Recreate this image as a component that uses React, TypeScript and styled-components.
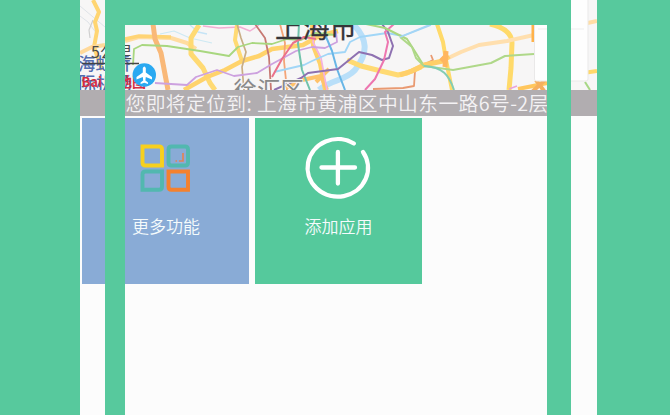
import React from "react";
import styled, { createGlobalStyle } from "styled-components";

const GREEN = "#57c99d";

const GlobalStyle = createGlobalStyle`
  * { box-sizing: border-box; }
  body { margin: 0; background: ${GREEN}; font-family: "Noto Sans CJK SC", sans-serif; overflow: hidden; }
`;

const Page = styled.main`
  display: flex;
  width: 670px;
  height: 415px;
  padding: 0 73px 0 80px;
  background: ${GREEN};
`;

const Screen = styled.section`
  position: relative;
  display: flex;
  flex-direction: column;
  width: 517px;
  height: 415px;
  background: #fcfcfc;
  overflow: hidden;
`;

const Frame = styled.div`
  position: absolute;
  inset: 0 26px -30px 25px;
  border: solid ${GREEN};
  border-width: 25px 24px 0 20px;
  pointer-events: none;
`;

const MapView = styled.svg`
  display: block;
  flex: none;
  width: 517px;
  height: 90px;
  background: #f7f6f6;
`;

const LocationBar = styled.div`
  flex: none;
  display: flex;
  align-items: center;
  height: 26px;
  padding-left: 45.5px;
  background: #b1adb0;
  color: #f4f2f4;
  font-size: 19.8px;
  font-weight: 350;
  letter-spacing: 0.38px;
  line-height: 26px;
  white-space: pre;
`;

const Tiles = styled.div`
  display: grid;
  grid-template-columns: 167px 167px;
  column-gap: 5.6px;
  padding: 2.4px 0 0 2.4px;
`;

const Tile = styled.div<{ $color: string }>`
  display: flex;
  flex-direction: column;
  align-items: center;
  height: 165.5px;
  padding-top: 18px;
  background: ${(p) => p.$color};
`;

const TileIcon = styled.svg`
  display: block;
  width: 66px;
  height: 64px;
  overflow: visible;
`;

const TileLabel = styled.span`
  margin-top: 13.5px;
  color: #f5fbfc;
  font-size: 17px;
  font-weight: 350;
  line-height: 24px;
`;

type Road = [path: string, color: string, width: number];

const roads: Road[] = [
  ["M80 16L88 22L97 34M80 6L105 27", "#dfe3e8", 1],
  ["M93 20L89 30L90 38", "#cfcfcf", 1.2],
  ["M93 0L99 12L95 22L97 31L94 47L102 70", "#ffd572", 4],
  ["M80 53L92 47L105 45", "#ffd99a", 4],
  ["M160 34L174 31L190 38L212 43", "#cde9f3", 1.2],
  ["M190 25L198 32L207 34", "#c5e4f6", 1.3],
  ["M203 26L219 28L240 27L250 31L259 25", "#f2afd3", 1.5],
  ["M354 25C367 39 369 52 355 70C345 81 330 80 319 90", "#b9dff9", 6],
  ["M125 41L139 37L171 38L187 43L196 49", "#ffdca0", 4],
  ["M125 39L139 36L171 37", "#ffd475", 3.5],
  ["M153 24L155 39L161 53L168 90", "#f9b878", 5],
  ["M199 25L191 38L191 54L203 68L210 83L215 90", "#ffda73", 5],
  ["M237 25L235 40L242 61", "#ffda73", 4],
  ["M184 90L207 77L225 70L242 61L259 56L272 49L303 45L319 36L338 31", "#ffd36b", 4.5],
  ["M237 24L241 38L246 52L242 67L244 90", "#c9ad84", 1.7],
  ["M255 24L265 38L269 57L271 90", "#c77973", 1.8],
  ["M280 24L285 43L284 61L287 90", "#f4a477", 1.8],
  ["M312 24L313 46L320 64L325 90", "#ffd269", 4],
  ["M286 88L302 80L321 76L327 90M316 82L329 69", "#ffc36b", 4],
  ["M347 60L361 66L381 71L398 75L407 73L421 67", "#ffda73", 5],
  ["M316 24L313 42L321 58L327 90", "#f4b2df", 1.7],
  ["M133 65L134 49L142 45L167 46L200 51L229 56L238 47L252 43L272 44L287 39L301 40L315 33L335 35", "#a8d77f", 1.8],
  ["M155 83L187 85L196 77L217 70L234 76L257 73L272 64L296 51L312 47L325 48L337 42L336 31", "#cda1df", 1.8],
  ["M274 72L304 65L312 61L328 54L345 52L350 42L360 37L387 33L403 36L431 25", "#a1d6f7", 1.8],
  ["M299 24L298 44L302 70L310 90", "#71c3ab", 2],
  ["M324 32L332 51L337 69L345 90", "#69b6e6", 2],
  ["M272 77L282 59L293 43L304 37L316 39", "#eb718b", 2],
  ["M274 90L301 78L308 73L338 69L359 52L372 55L382 60L389 58L393 46L388 32L382 24", "#8e71b1", 2],
  ["M394 24L385 32L388 42L384 60L375 79L365 90", "#ed76b0", 2],
  ["M366 24L385 28L407 39L414 50L424 66", "#abd77f", 2],
  ["M373 89L403 88L414 86L415 71L425 64L433 60L431 55", "#e99a72", 1.8],
  ["M437 24L443 42L446 60L452 90", "#ffda6a", 4],
  ["M490 24C503 27 512 32 512 43L511 68L509 90", "#ffda6a", 5],
  ["M444 60L461 52L479 45L507 41L534 35", "#ffdfae", 4],
  ["M400 75L412 71L424 65L443 61L449 56", "#ffcf69", 5],
  ["M441 61L447 55M446 51L445 67", "#ffb65f", 5],
  ["M400 37L412 47L416 58L424 66L453 70L491 63L505 56L534 54", "#afd889", 2],
  ["M424 66C443 67 449 75 454 90", "#83cdb5", 2],
  ["M400 37L429 25", "#a5d5f5", 1.8],
  ["M533 24V42", "#ffb24b", 3],
  ["M518 89L533 86L552 82L571 78", "#ffc65d", 4],
  ["M536 80L544 91M546 79L532 92", "#f5af5e", 4],
  ["M509 89L517 86", "#e9a3db", 1.5],
  ["M571 24L583 24L597 21", "#ffdda5", 4],
  ["M571 75L583 73L597 71", "#ffd86a", 4],
  ["M585 82L590 90", "#a8d786", 2],
];

function CityMap() {
  return (
    <MapView viewBox="80 0 517 90" fill="none" strokeLinejoin="round">
      {roads.map(([d, color, width]) => (
        <path key={d} d={d} stroke={color} strokeWidth={width} />
      ))}
      <g fontFamily="Noto Sans CJK SC, sans-serif">
        <text x="275" y="38" fontSize="27.300" fill="#353538" fontWeight="400" stroke="#353538" strokeWidth="0.300">上海市</text>
        <text x="233.500" y="98.500" fontSize="23.500" fill="#898989" stroke="#f7f5f5" strokeWidth="2" paintOrder="stroke" fontWeight="400">徐汇区</text>
        <text x="78" y="70" fontSize="17.500" fill="#526daf" fontWeight="500">海虹桥</text>
        <text x="78" y="90" fontSize="18" fill="#526daf" fontWeight="500">际机场</text>
        <g fill="#d52e43" fontWeight="700">
          <text x="81.500" y="87" fontSize="13">Bai</text>
          <text x="118" y="87" fontSize="14">地图</text>
        </g>
        <text x="91" y="58" fontSize="16" fill="#4b4b4b">5公里</text>
      </g>
      <path d="M82 63.500H139" stroke="#444" strokeWidth="1.300" />
      <circle cx="144.300" cy="75" r="11.700" fill="#2aa9f1" />
      <path d="M142.800 68Q144.300 65 145.800 68V72.500L152 77V79.500L145.800 77L145.400 80.500L148 82.500V84L144.300 82.800L140.600 84V82.500L143.200 80.500L142.800 77L136.500 79.500V77L142.800 72.500Z" fill="#fff" />
      <rect x="534.500" y="-5" width="53.500" height="86" rx="2" fill="#fefefe" stroke="#eae9e9" />
      <path d="M538 29H584" stroke="#eee" />
    </MapView>
  );
}

function AppsIcon() {
  return (
    <TileIcon viewBox="0 0 66 64" fill="none" strokeWidth="3.900">
      <path d="M9.500 10.500H26Q29 10.500 29 13.500V29.500H12.500Q9.500 29.500 9.500 26.500Z" stroke="#f7d01e" />
      <path d="M38.500 10.500H52Q55 10.500 55 13.500V26.500Q55 29.500 52 29.500H38.500Q35.500 29.500 35.500 26.500V13.500Q35.500 10.500 38.500 10.500Z" stroke="#52b8af" />
      <path d="M12.500 35.500H29V50.800Q29 53.800 26 53.800H9.500V38.500Q9.500 35.500 12.500 35.500Z" stroke="#52b8af" />
      <path d="M35.500 35.500H55V53.800H38.500Q35.500 53.800 35.500 50.800Z" stroke="#f4812e" />
      <path d="M50 17V25H46M44 25H42.500" stroke="#e18355" strokeWidth="1.700" />
    </TileIcon>
  );
}

function AddIcon() {
  return (
    <TileIcon viewBox="0 0 66 64" fill="none" stroke="#fff" strokeWidth="4.300" strokeLinecap="round">
      <path d="M48.900 7.500A30.200 28.800 0 1 0 58 16" />
      <path d="M16.500 31.500H50M32.900 16V47.500" />
    </TileIcon>
  );
}

export default function App() {
  return (
    <Page>
      <GlobalStyle />
      <Screen>
        <CityMap />
        <LocationBar>您即将定位到: 上海市黄浦区中山东一路6号-2层</LocationBar>
        <Tiles>
          <Tile $color="#89abd6">
            <AppsIcon />
            <TileLabel>更多功能</TileLabel>
          </Tile>
          <Tile $color="#55c99c">
            <AddIcon />
            <TileLabel>添加应用</TileLabel>
          </Tile>
        </Tiles>
        <Frame />
      </Screen>
    </Page>
  );
}
